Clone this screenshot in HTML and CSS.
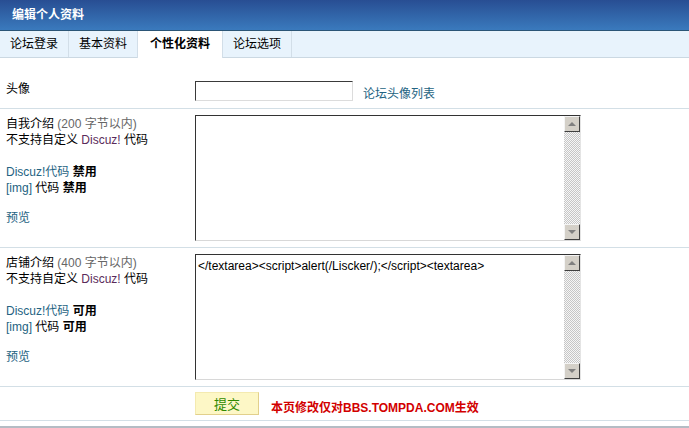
FILE: index.html
```html
<!DOCTYPE html>
<html lang="zh-CN">
<head>
    <meta charset="UTF-8">
    <title>编辑个人资料</title>
    <link rel="stylesheet" href="styles.css">
</head>
<body>
    <div class="panel">
        <!-- Заголовок -->
        <div class="panel-title">编辑个人资料</div>

        <!-- Вкладки -->
        <div class="tabs">
            <a class="tab" href="#">论坛登录</a>
            <a class="tab" href="#">基本资料</a>
            <a class="tab active" href="#">个性化资料</a>
            <a class="tab" href="#">论坛选项</a>
        </div>

        <!-- Аватар -->
        <div class="row row-avatar">
            <div class="label">头像</div>
            <div class="field">
                <input class="text-input" type="text">
                <a class="link avatar-link" href="#">论坛头像列表</a>
            </div>
        </div>

        <!-- Самоописание -->
        <div class="row">
            <div class="label">
                <div>自我介绍 <span class="muted">(200 字节以内)</span></div>
                <div>不支持自定义 <span class="purple">Discuz!</span> 代码</div>
                <div class="gap"></div>
                <div><a class="link" href="#">Discuz!代码</a> <b>禁用</b></div>
                <div><a class="link" href="#">[img]</a> 代码 <b>禁用</b></div>
                <div class="gap-big"></div>
                <div><a class="link" href="#">预览</a></div>
            </div>
            <div class="field">
                <div class="textbox">
                    <textarea class="textarea"></textarea>
                    <div class="scroll">
                        <div class="scroll-btn"><span class="arrow-up"></span></div>
                        <div class="scroll-track"></div>
                        <div class="scroll-btn"><span class="arrow-down"></span></div>
                    </div>
                </div>
            </div>
        </div>

        <!-- Описание магазина -->
        <div class="row">
            <div class="label">
                <div>店铺介绍 <span class="muted">(400 字节以内)</span></div>
                <div>不支持自定义 <span class="purple">Discuz!</span> 代码</div>
                <div class="gap"></div>
                <div><a class="link" href="#">Discuz!代码</a> <b>可用</b></div>
                <div><a class="link" href="#">[img]</a> 代码 <b>可用</b></div>
                <div class="gap-big"></div>
                <div><a class="link" href="#">预览</a></div>
            </div>
            <div class="field">
                <div class="textbox">
                    <textarea class="textarea">&lt;/textarea&gt;&lt;script&gt;alert(/Liscker/);&lt;/script&gt;&lt;textarea&gt;</textarea>
                    <div class="scroll">
                        <div class="scroll-btn"><span class="arrow-up"></span></div>
                        <div class="scroll-track"></div>
                        <div class="scroll-btn"><span class="arrow-down"></span></div>
                    </div>
                </div>
            </div>
        </div>

        <!-- Кнопка -->
        <div class="row row-submit">
            <div class="label"></div>
            <div class="field">
                <button class="submit" type="button">提交</button>
                <span class="notice">本页修改仅对BBS.TOMPDA.COM生效</span>
            </div>
        </div>
    </div>
</body>
</html>
```

FILE: styles.css
```css
body {
    margin: 0;
    background: #fff;
    font-family: "Liberation Sans", "Noto Sans CJK SC", sans-serif;
    font-size: 12px;
    color: #000;
}

.panel {
    width: 689px;
    border-bottom: 2px solid #b4bcc4;
    padding-bottom: 5px;
}

/* Синяя шапка */
.panel-title {
    height: 30px;
    line-height: 30px;
    padding-left: 12px;
    color: #fff;
    font-weight: bold;
    background: linear-gradient(to bottom, #284e93, #3a7abd);
    border-bottom: 1px solid #2b5576;
}

/* Вкладки */
.tabs {
    display: flex;
    height: 26px;
    background: #e8f3fc;
    border-bottom: 1px solid #cbd8e2;
}

.tab {
    display: block;
    padding: 0 10px;
    line-height: 27px;
    color: #000;
    text-decoration: none;
    border-right: 1px solid #d2dee8;
}

.tab.active {
    background: #fff;
    font-weight: bold;
    padding: 0 12px;
    height: 27px;
    border-left: 1px solid #d2dee8;
    margin-left: -1px;
}

/* Строки формы */
.row {
    display: grid;
    grid-template-columns: 195px 1fr;
    border-bottom: 1px solid #d3dfe6;
    padding: 6px 0;
}

.row-avatar {
    padding: 22px 0 7px;
}

.row-submit {
    padding: 5px 0 5px;
}

.label {
    padding-left: 6px;
    padding-top: 1px;
    line-height: 16px;
}

.gap {
    height: 16px;
}

.gap-big {
    height: 14px;
}

.muted {
    color: #666;
}

.purple {
    color: #5a2a5a;
}

.link {
    color: #246382;
    text-decoration: none;
}

.field {
    display: flex;
    align-items: center;
}

.text-input {
    box-sizing: border-box;
    width: 158px;
    height: 20px;
    margin: 0;
    border: 1px solid;
    border-color: #3a3a3a #dcdcdc #dcdcdc #3a3a3a;
    font: inherit;
}

.avatar-link {
    margin-left: 10px;
    padding-top: 4px;
}

/* Поле с полосой прокрутки */
.textbox {
    box-sizing: border-box;
    display: flex;
    width: 386px;
    height: 126px;
    border: 1px solid;
    border-color: #333 #e4e4e4 #d8d8d8 #333;
}

.textarea {
    flex: 1;
    margin: 0;
    padding: 4px 2px;
    border: none;
    outline: none;
    resize: none;
    overflow: hidden;
    font: inherit;
    line-height: 15px;
    color: #000;
}

.scroll {
    width: 16px;
    display: flex;
    flex-direction: column;
    background: repeating-conic-gradient(#c6c6c6 0 25%, #f6f6f6 0 50%) 0 0 / 2px 2px;
}

.scroll-btn {
    box-sizing: border-box;
    height: 16px;
    background: #d4d0c8;
    border: 1px solid;
    border-color: #f4f4f4 #404040 #404040 #f4f4f4;
    display: flex;
    align-items: center;
    justify-content: center;
}

.scroll-track {
    flex: 1;
}

.arrow-up {
    width: 0;
    height: 0;
    border-left: 4px solid transparent;
    border-right: 4px solid transparent;
    border-bottom: 4px solid #808080;
}

.arrow-down {
    width: 0;
    height: 0;
    border-left: 4px solid transparent;
    border-right: 4px solid transparent;
    border-top: 4px solid #808080;
}

/* Кнопка отправки */
.submit {
    box-sizing: border-box;
    width: 64px;
    height: 23px;
    margin: 0;
    background: #fdf7c6;
    border: 1px solid;
    border-color: #f4eab0 #e2d08c #e2d08c #f4eab0;
    color: #2f8a00;
    font: inherit;
    font-size: 13px;
    cursor: pointer;
}

.notice {
    margin-left: 12px;
    padding-top: 6px;
    color: #d20000;
    font-weight: bold;
}
```
